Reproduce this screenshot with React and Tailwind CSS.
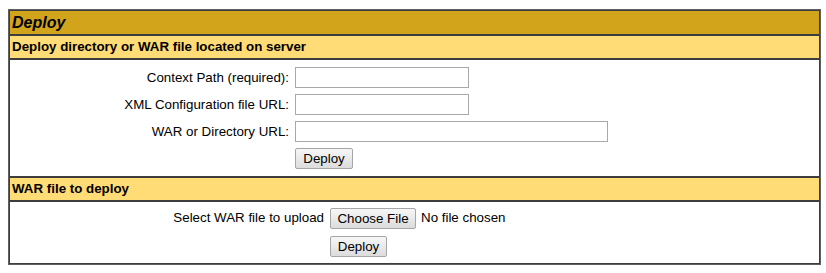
import React, { useState } from "react";

const cellBorder = "border border-[#3d3d3d]";

const Button = ({ children, width }) => (
  <button
    type="button"
    className={`h-[21px] ${width} rounded-[2px] border border-[#a6a6a6] bg-gradient-to-b from-[#f7f7f7] to-[#dcdcdc] text-[13.33px] leading-[19px] text-black`}
  >
    {children}
  </button>
);

const App = () => {
  const [deployPath, setDeployPath] = useState("");
  const [deployConfig, setDeployConfig] = useState("");
  const [deployWar, setDeployWar] = useState("");

  const rows = [
    { label: "Context Path (required):", value: deployPath, set: setDeployPath, width: "w-[174px]" },
    { label: "XML Configuration file URL:", value: deployConfig, set: setDeployConfig, width: "w-[174px]" },
    { label: "WAR or Directory URL:", value: deployWar, set: setDeployWar, width: "w-[313px]" },
  ];

  return (
    <div className="min-h-[273px] bg-white pl-[8px] pt-[9px] font-['Liberation_Sans',Arial,sans-serif] text-black">
      <div className="w-[813px] border border-[#5f5f5f]">
        {/* title */}
        <div className={`${cellBorder} h-[25px] bg-[#d2a41c] px-[2px] text-[16px] font-bold italic leading-[23px]`}>
          Deploy
        </div>

        <div className={`${cellBorder} h-[24px] bg-[#ffdc75] px-[2px] text-[13.33px] font-bold leading-[22px]`}>
          Deploy directory or WAR file located on server
        </div>

        <form className={`${cellBorder} grid grid-cols-[279px_1fr] gap-x-[6px] gap-y-[6px] pb-[7px] pt-[7px] text-[13.33px]`}>
          {rows.map((row) => (
            <React.Fragment key={row.label}>
              <div className="flex h-[21px] items-center justify-end whitespace-nowrap">{row.label}</div>
              <div className="flex h-[21px] items-center">
                <input
                  type="text"
                  className={`h-[21px] ${row.width} border border-[#a9a9a9] bg-white px-[2px] outline-none`}
                  value={row.value}
                  onChange={(e) => row.set(e.target.value)}
                />
              </div>
            </React.Fragment>
          ))}
          <div />
          <div className="flex h-[21px] items-center">
            <Button width="w-[58px]">Deploy</Button>
          </div>
        </form>

        <div className={`${cellBorder} h-[24px] bg-[#ffdc75] px-[2px] text-[13.33px] font-bold leading-[22px]`}>
          WAR file to deploy
        </div>

        <form className={`${cellBorder} grid grid-cols-[314px_1fr] gap-x-[6px] gap-y-[6px] pb-[6px] pt-[5px] text-[13.33px]`}>
          <div className="flex h-[22px] items-center justify-end whitespace-nowrap">Select WAR file to upload</div>
          <div className="flex h-[22px] items-center gap-[5px]">
            <Button width="w-[86px]">Choose File</Button>
            <span>No file chosen</span>
          </div>
          <div />
          <div className="flex h-[22px] items-center">
            <Button width="w-[57px]">Deploy</Button>
          </div>
        </form>
      </div>
    </div>
  );
};

export default App;
